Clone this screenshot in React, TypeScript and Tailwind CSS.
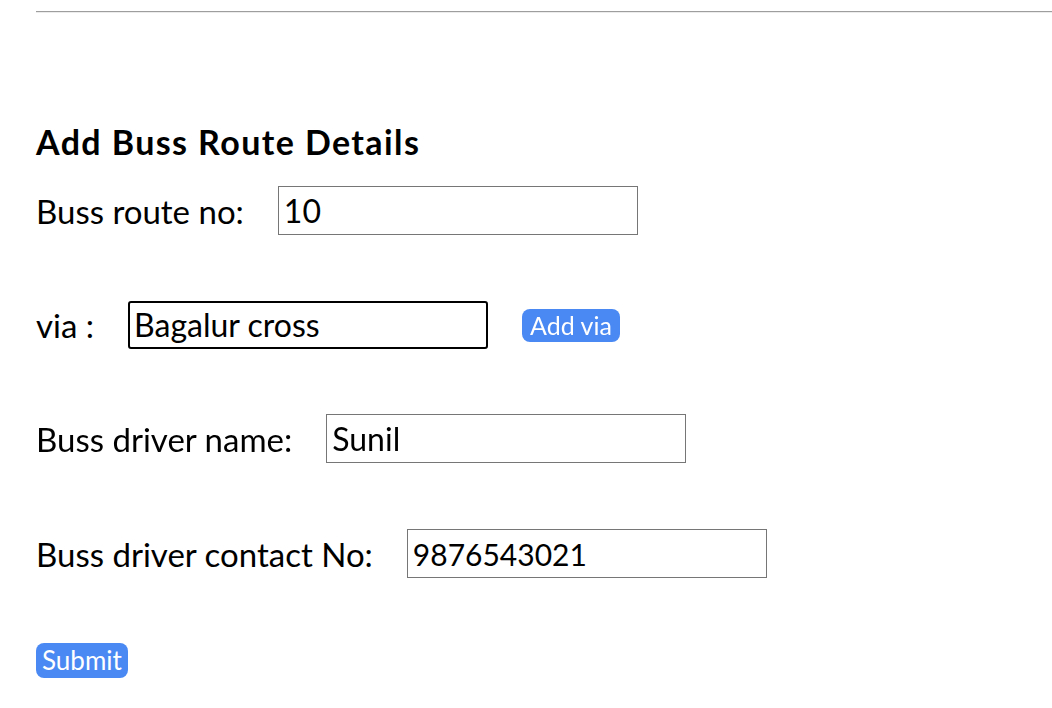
import { useState } from 'react';

const font = { fontFamily: '"Lato", "Open Sans", sans-serif' };

function Field({
  label,
  value,
  onChange,
  focused,
  small,
}: {
  label: string;
  value: string;
  onChange: (v: string) => void;
  focused?: boolean;
  small?: boolean;
}) {
  const size = small ? 'text-[30px]' : 'text-[32px]';
  return (
    <div className="flex items-center gap-[34px]">
      <label className="text-[33px] leading-[40px] text-black">{label}</label>
      <input
        autoFocus={focused}
        value={value}
        onChange={(e) => onChange(e.target.value)}
        style={font}
        className={
          focused
            ? `h-[48px] w-[360px] rounded-[3px] border-2 border-black px-[4px] ${size} text-black outline-none`
            : `h-[49px] w-[360px] border border-[#767676] px-[5px] ${size} text-black outline-none`
        }
      />
    </div>
  );
}

export default function App() {
  const [routeNo, setRouteNo] = useState('10');
  const [via, setVia] = useState('Bagalur cross');
  const [driver, setDriver] = useState('Sunil');
  const [contact, setContact] = useState('9876543021');

  return (
    <div className="min-h-[708px] bg-white pl-[36px]" style={font}>
      <hr className="mt-[11px] border-t border-b border-t-[#9e9e9e] border-b-[#ececec]" />

      <h3 className="mt-[111px] text-[34px] font-bold leading-[36px] tracking-[1.4px] text-black">Add Buss Route Details</h3>

      <div className="mt-[26px]">
        <Field label="Buss route no:" value={routeNo} onChange={setRouteNo} />
      </div>

      <div className="mt-[66px] flex items-center gap-[34px]">
        <Field label="via :" value={via} onChange={setVia} focused />
        <button className="h-[33px] rounded-[8px] bg-[#4a89f3] px-[8px] text-[25px] leading-[33px] text-white">Add via</button>
      </div>

      <div className="mt-[65px]">
        <Field label="Buss driver name:" value={driver} onChange={setDriver} />
      </div>

      <div className="mt-[66px]">
        <Field label="Buss driver contact No:" value={contact} onChange={setContact} small />
      </div>

      <button className="mt-[65px] h-[35px] rounded-[8px] bg-[#4a89f3] px-[6px] text-[26px] leading-[35px] text-white">Submit</button>
    </div>
  );
}
